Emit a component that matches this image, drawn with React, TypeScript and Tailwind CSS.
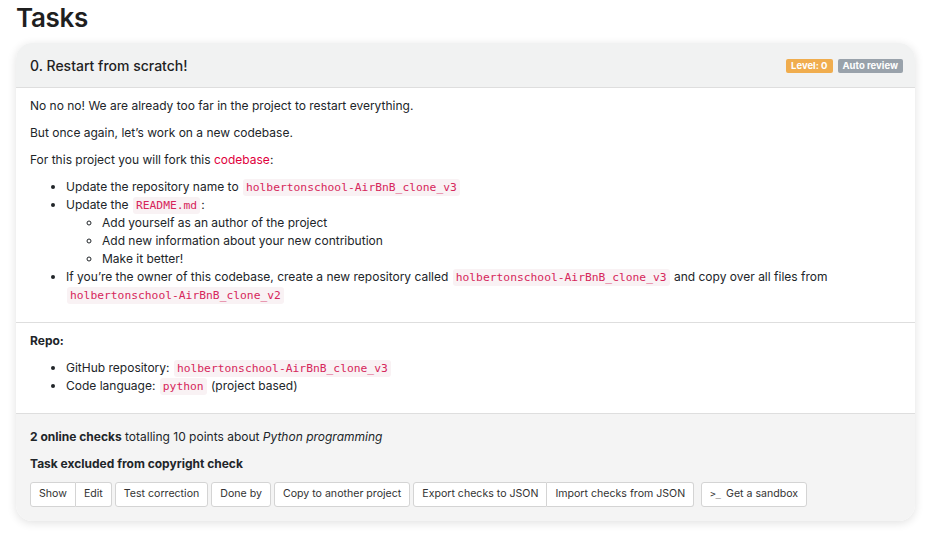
import React from "react";

/* ── Code ── */
function Code({ children }: { children: React.ReactNode }) {
  return (
    <code className="font-['DejaVu_Sans_Mono',monospace] text-[11.3px] leading-none text-[#d6265b] bg-[#f9f2f4] rounded-[3px] px-[3px] py-[2px] mx-[1px]">
      {children}
    </code>
  );
}

/* ── Buttons ── */
function Btn({ children, className = "" }: { children: React.ReactNode; className?: string }) {
  return (
    <button
      type="button"
      className={
        "h-[25px] px-[8px] text-[10.6px] leading-none text-[#333] bg-white border border-[#d4d4d4] whitespace-nowrap " +
        className
      }
    >
      {children}
    </button>
  );
}

export default function App() {
  return (
    <div className="min-h-[545px] bg-white px-4 font-['Inter','Liberation_Sans',sans-serif] text-[12px] text-[#212529]">
      <h1 className="text-[26px] font-semibold leading-[36px] text-[#1f1f1f] tracking-[-0.3px]">Tasks</h1>

      <div className="mt-[7px] w-[899px] rounded-[16px] shadow-[0_2px_10px_rgba(0,0,0,0.12)] overflow-hidden">
        {/* Header */}
        <div className="h-[45px] flex items-center justify-between pl-[14px] pr-[12px] bg-[#f1f2f2] border-b border-[#dedede]">
          <h3 className="text-[14px] font-medium text-[#1f1f1f]">0. Restart from scratch!</h3>
          <div className="flex gap-[5px] pt-[1px]">
            <span className="h-[14px] px-[5px] rounded-[2px] bg-[#f0ad4e] text-white text-[9.5px] font-bold leading-[14px]">
              Level: 0
            </span>
            <span className="h-[14px] px-[5px] rounded-[2px] bg-[#99a2ab] text-white text-[9.5px] font-bold leading-[14px]">
              Auto review
            </span>
          </div>
        </div>

        {/* Body */}
        <div className="bg-white px-[14px] pt-[9px] pb-[18px] border-b border-[#dedede] leading-[18px]">
          <p className="mb-[9px]">No no no! We are already too far in the project to restart everything.</p>
          <p className="mb-[9px]">But once again, let’s work on a new codebase.</p>
          <p className="mb-[9px]">
            For this project you will fork this <a className="text-[#e0003c]">codebase</a>:
          </p>
          <ul className="list-disc pl-[36px]">
            <li>
              Update the repository name to <Code>holbertonschool-AirBnB_clone_v3</Code>
            </li>
            <li>
              Update the <Code>README.md</Code>:
              <ul className="list-[circle] pl-[36px]">
                <li>Add yourself as an author of the project</li>
                <li>Add new information about your new contribution</li>
                <li>Make it better!</li>
              </ul>
            </li>
            <li>
              If you’re the owner of this codebase, create a new repository called{" "}
              <Code>holbertonschool-AirBnB_clone_v3</Code> and copy over all files from{" "}
              <Code>holbertonschool-AirBnB_clone_v2</Code>
            </li>
          </ul>
        </div>

        {/* Repo */}
        <div className="bg-white px-[14px] pt-[9px] pb-[18px] border-b border-[#dedede] leading-[18px]">
          <p className="font-bold mb-[9px]">Repo:</p>
          <ul className="list-disc pl-[36px]">
            <li>
              GitHub repository: <Code>holbertonschool-AirBnB_clone_v3</Code>
            </li>
            <li>
              Code language: <Code>python</Code> (project based)
            </li>
          </ul>
        </div>

        {/* Footer */}
        <div className="bg-[#f4f4f4] px-[14px] pt-[14px] pb-[14px] leading-[18px]">
          <p className="mb-[9px]">
            <strong>2 online checks</strong> totalling 10 points about <em>Python programming</em>
          </p>
          <p className="font-bold mb-[9px]">Task excluded from copyright check</p>
          <div className="flex gap-[3px]">
            <div className="flex">
              <Btn className="rounded-l-[3px]">Show</Btn>
              <Btn className="rounded-r-[3px] border-l-0">Edit</Btn>
            </div>
            <Btn className="rounded-[3px]">Test correction</Btn>
            <Btn className="rounded-[3px]">Done by</Btn>
            <Btn className="rounded-[3px]">Copy to another project</Btn>
            <div className="flex">
              <Btn className="rounded-l-[3px]">Export checks to JSON</Btn>
              <Btn className="rounded-r-[3px] border-l-0">Import checks from JSON</Btn>
            </div>
            <Btn className="rounded-[3px] ml-[4px]">
              <span className="font-['DejaVu_Sans_Mono',monospace] text-[9px] mr-[5px]">&gt;_</span>Get a sandbox
            </Btn>
          </div>
        </div>
      </div>
    </div>
  );
}
